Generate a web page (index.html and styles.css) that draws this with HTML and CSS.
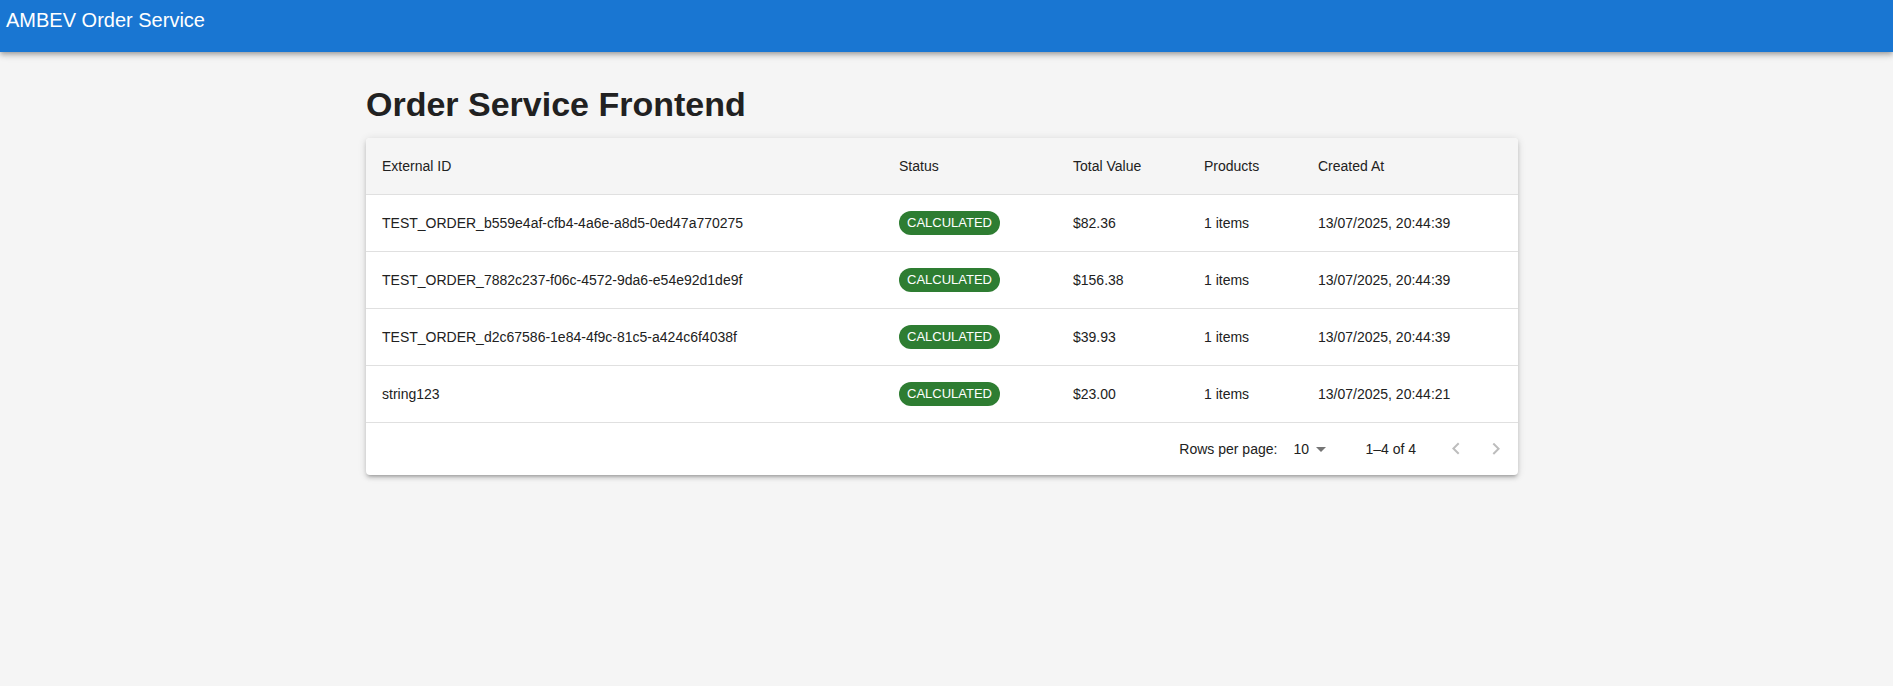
FILE: index.html
```html
<!DOCTYPE html>
<html lang="en">
<head>
<meta charset="utf-8">
<meta name="viewport" content="width=device-width, initial-scale=1">
<title>AMBEV Order Service</title>
<link rel="stylesheet" href="styles.css">
</head>
<body>
<header class="app-bar">
  <div class="app-title">AMBEV Order Service</div>
</header>
<main class="container">
  <h1 class="page-title">Order Service Frontend</h1>
  <section class="paper">
    <table class="orders">
      <colgroup>
        <col class="col-id"><col class="col-status"><col class="col-value"><col class="col-products"><col class="col-created">
      </colgroup>
      <thead>
        <tr><th scope="col">External ID</th><th scope="col">Status</th><th scope="col">Total Value</th><th scope="col">Products</th><th scope="col">Created At</th></tr>
      </thead>
      <tbody>
        <tr><td>TEST_ORDER_b559e4af-cfb4-4a6e-a8d5-0ed47a770275</td><td><span class="chip">CALCULATED</span></td><td>$82.36</td><td>1 items</td><td>13/07/2025, 20:44:39</td></tr>
        <tr><td>TEST_ORDER_7882c237-f06c-4572-9da6-e54e92d1de9f</td><td><span class="chip">CALCULATED</span></td><td>$156.38</td><td>1 items</td><td>13/07/2025, 20:44:39</td></tr>
        <tr><td>TEST_ORDER_d2c67586-1e84-4f9c-81c5-a424c6f4038f</td><td><span class="chip">CALCULATED</span></td><td>$39.93</td><td>1 items</td><td>13/07/2025, 20:44:39</td></tr>
        <tr><td>string123</td><td><span class="chip">CALCULATED</span></td><td>$23.00</td><td>1 items</td><td>13/07/2025, 20:44:21</td></tr>
      </tbody>
    </table>
    <div class="pagination">
      <label for="rows">Rows per page:</label>
      <div class="select-wrap">
        <select id="rows" class="rows-select"><option>5</option><option selected>10</option><option>25</option></select>
        <svg class="select-icon" viewBox="0 0 24 24" aria-hidden="true"><path d="M7 10l5 5 5-5z"/></svg>
      </div>
      <span class="range">1–4 of 4</span>
      <div class="pager">
        <button class="page-button" type="button" disabled aria-label="Go to previous page"><svg viewBox="0 0 24 24"><path d="M15.41 16.09l-4.58-4.59 4.58-4.59L14 5.5l-6 6 6 6z"/></svg></button>
        <button class="page-button" type="button" disabled aria-label="Go to next page"><svg viewBox="0 0 24 24"><path d="M8.59 16.34l4.58-4.59-4.58-4.59L10 5.75l6 6-6 6z"/></svg></button>
      </div>
    </div>
  </section>
</main>
</body>
</html>
```
FILE: styles.css
```css
* { box-sizing: border-box; }

body {
  margin: 0;
  min-height: 100vh;
  background: #f5f5f5;
  color: #212121;
  font: 14px/20px "Liberation Sans", Arial, sans-serif;
}

.app-bar {
  position: relative;
  padding: 4px 6px 16px;
  background: #1976d2;
  color: #fff;
  box-shadow: 0 2px 4px -1px rgba(0, 0, 0, .2), 0 4px 5px rgba(0, 0, 0, .14), 0 1px 10px rgba(0, 0, 0, .12);
}

.app-title { font-size: 20px; line-height: 32px; }

.container {
  max-width: 1209px;
  margin: 0 auto;
  padding: 32px 33px 0 24px;
}

.page-title {
  margin: 0 0 14px;
  font-size: 34px;
  line-height: 40px;
  font-weight: 700;
}

.paper {
  overflow: hidden;
  border-radius: 4px;
  background: #fff;
  box-shadow: 0 3px 3px -2px rgba(0, 0, 0, .2), 0 3px 4px rgba(0, 0, 0, .14), 0 1px 8px rgba(0, 0, 0, .12);
}

.orders {
  width: 100%;
  border-collapse: separate;
  border-spacing: 0;
  table-layout: fixed;
}

.col-status { width: 174px; }
.col-value { width: 131px; }
.col-products { width: 114px; }
.col-created { width: 216px; }

th, td {
  height: 57px;
  padding: 0 16px;
  border-bottom: 1px solid #e0e0e0;
  text-align: left;
  font-weight: 400;
  vertical-align: middle;
}

th { background: #f5f5f5; }

.chip {
  display: inline-block;
  padding: 0 8px;
  border-radius: 12px;
  background: #2e7d32;
  color: #fff;
  font-size: 13px;
  line-height: 24px;
  vertical-align: middle;
}

.pagination {
  display: flex;
  align-items: center;
  justify-content: flex-end;
  min-height: 52px;
  padding-right: 2px;
}

.select-wrap {
  position: relative;
  margin: 0 32px 0 8px;
}

.rows-select {
  appearance: none;
  display: block;
  width: 48px;
  height: 24px;
  padding: 0 24px 0 8px;
  border: 0;
  background: transparent;
  color: inherit;
  font: inherit;
}

.select-icon {
  position: absolute;
  top: 0;
  right: 0;
  width: 24px;
  height: 24px;
  fill: #757575;
  pointer-events: none;
}

.pager { display: flex; margin-left: 20px; }

.page-button {
  display: flex;
  padding: 8px;
  border: 0;
  background: transparent;
}

.page-button svg { width: 24px; height: 24px; fill: #bdbdbd; }
```
